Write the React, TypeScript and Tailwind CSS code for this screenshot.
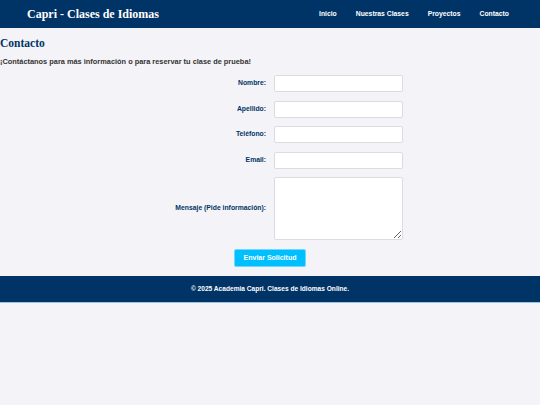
import React from "react";

const fields = [
  { id: "nombre", label: "Nombre:", type: "text" },
  { id: "apellido", label: "Apellido:", type: "text" },
  { id: "telefono", label: "Teléfono:", type: "tel" },
  { id: "email", label: "Email:", type: "email" },
];

const links = ["Inicio", "Nuestras Clases", "Proyectos", "Contacto"];

export default function App() {
  return (
    <div className="min-h-[405px] bg-[#f4f4f8] font-['Liberation_Sans',Arial,sans-serif]">
      {/* Header */}
      <header className="flex h-[28px] items-center justify-between bg-[#003366] pl-[27px] pr-[31px]">
        <h1 className="font-['Liberation_Serif',Georgia,serif] text-[12px] font-bold text-white">
          Capri - Clases de Idiomas
        </h1>
        <nav className="flex gap-[19px]">
          {links.map((link) => (
            <a key={link} href="#" className="text-[6.8px] font-bold text-white">
              {link}
            </a>
          ))}
        </nav>
      </header>

      {/* Contact */}
      <section className="pt-[8px] pb-[9px]">
        <h2 className="font-['Liberation_Serif',Georgia,serif] text-[11.5px] font-bold leading-[14px] text-[#003366]">
          Contacto
        </h2>
        <p className="mt-[7px] text-[7.4px] font-bold leading-[9px] text-[#333]">
          ¡Contáctanos para más información o para reservar tu clase de prueba!
        </p>

        <form className="mt-[9px] flex flex-col items-center">
          <div className="grid grid-cols-[129px_129px] items-center gap-x-[8px] gap-y-[8.5px]">
            {fields.map((f) => (
              <React.Fragment key={f.id}>
                <label htmlFor={f.id} className="text-right text-[6.8px] font-bold text-[#003366]">
                  {f.label}
                </label>
                <input
                  id={f.id}
                  type={f.type}
                  className="h-[17px] w-[129px] rounded-[2px] border border-[#dcdce0] bg-white"
                />
              </React.Fragment>
            ))}
            <label htmlFor="mensaje" className="text-right text-[6.8px] font-bold text-[#003366]">
              Mensaje (Pide información):
            </label>
            <textarea
              id="mensaje"
              className="h-[63px] w-[129px] rounded-[2px] border border-[#dcdce0] bg-white"
            />
          </div>
          <button
            type="button"
            className="mt-[9px] h-[18px] w-[72px] rounded-[2px] border border-[#6fd8ff] bg-[#00bfff] text-[7px] font-bold text-white"
          >
            Enviar Solicitud
          </button>
        </form>
      </section>

      {/* Footer */}
      <footer className="flex h-[27px] items-center justify-center border-b border-[#9cc3e6] bg-[#003366]">
        <p className="text-[6.6px] font-bold text-white">
          © 2025 Academia Capri. Clases de Idiomas Online.
        </p>
      </footer>
    </div>
  );
}
